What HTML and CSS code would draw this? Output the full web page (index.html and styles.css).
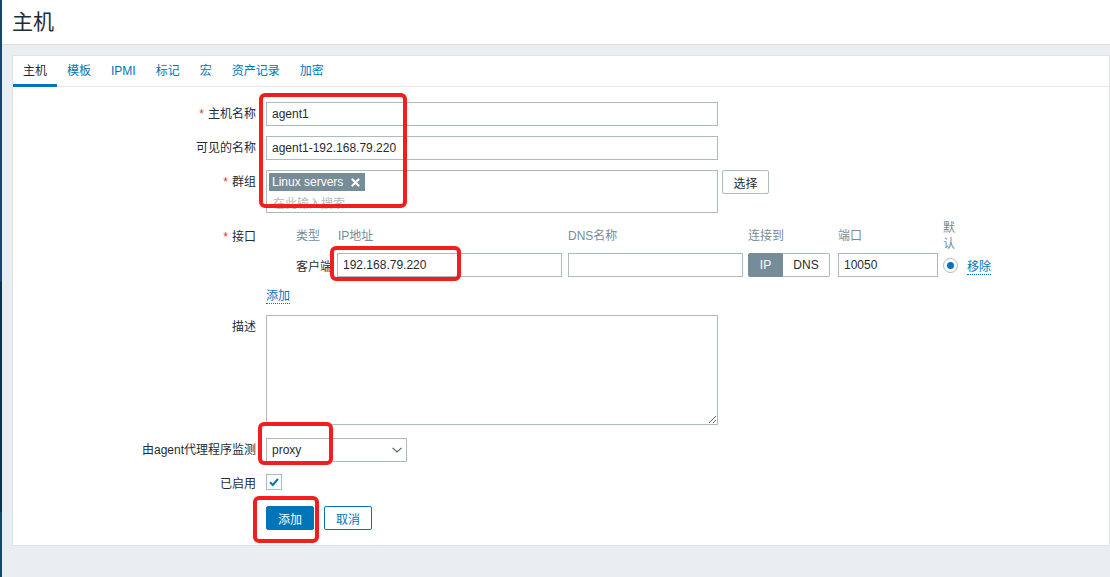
FILE: index.html
```html
<!DOCTYPE html>
<html lang="zh-CN">
  <head>
    <meta charset="UTF-8" />
    <meta name="viewport" content="width=device-width, initial-scale=1.0" />
    <title>主机</title>
    <link rel="stylesheet" href="styles.css">
  </head>
  <body>
    <div class="page">
      <aside class="sidebar"></aside>
      <main class="main">
        <header class="header">
          <h1 class="header__title">主机</h1>
        </header>
        <div class="wrap">
          <div class="card">
            <ul class="tabs">
              <li class="tabs__item tabs__item--active">主机</li>
              <li class="tabs__item">模板</li>
              <li class="tabs__item">IPMI</li>
              <li class="tabs__item">标记</li>
              <li class="tabs__item">宏</li>
              <li class="tabs__item">资产记录</li>
              <li class="tabs__item">加密</li>
            </ul>
            <form class="form">
              <div class="form__row">
                <label class="form__label"><span class="req">*</span>主机名称</label>
                <div class="form__field"><input class="input input--wide" type="text" value="agent1" /></div>
              </div>
              <div class="form__row">
                <label class="form__label">可见的名称</label>
                <div class="form__field"><input class="input input--wide" type="text" value="agent1-192.168.79.220" /></div>
              </div>
              <div class="form__row">
                <label class="form__label"><span class="req">*</span>群组</label>
                <div class="form__field form__field--inline">
                  <div class="multi">
                    <div class="multi__tags">
                      <span class="tag">Linux servers
                        <svg class="tag__x" width="9" height="9" viewBox="0 0 9 9"><path d="M1.5 1.5 L7.5 7.5 M7.5 1.5 L1.5 7.5" stroke="#fff" stroke-width="2.2" stroke-linecap="round" /></svg>
                      </span>
                    </div>
                    <div class="multi__placeholder">在此输入搜索</div>
                  </div>
                  <button class="btn btn--alt btn--select" type="button">选择</button>
                </div>
              </div>
              <div class="form__row form__row--iface">
                <label class="form__label form__label--top"><span class="req">*</span>接口</label>
                <div class="form__field">
                  <div class="iface">
                    <div></div>
                    <div class="iface__head">类型</div>
                    <div class="iface__head iface__head--ip">IP地址</div>
                    <div class="iface__head">DNS名称</div>
                    <div class="iface__head">连接到</div>
                    <div class="iface__head">端口</div>
                    <div class="iface__head iface__head--default">默认</div>
                    <div></div>

                    <div></div>
                    <div class="iface__type">客户端</div>
                    <div><input class="input input--ip" type="text" value="192.168.79.220" /></div>
                    <div><input class="input input--dns" type="text" value="" /></div>
                    <div class="toggle">
                      <span class="toggle__seg toggle__seg--on">IP</span>
                      <span class="toggle__seg">DNS</span>
                    </div>
                    <div><input class="input input--port" type="text" value="10050" /></div>
                    <div class="radio"><span class="radio__dot"></span></div>
                    <div><a class="link">移除</a></div>
                  </div>
                  <div class="iface__add"><a class="link">添加</a></div>
                </div>
              </div>
              <div class="form__row">
                <label class="form__label form__label--top">描述</label>
                <div class="form__field"><textarea class="textarea"></textarea></div>
              </div>
              <div class="form__row">
                <label class="form__label">由agent代理程序监测</label>
                <div class="form__field">
                  <div class="select">
                    <span>proxy</span>
                    <svg width="10" height="6" viewBox="0 0 10 6"><path d="M0.5 0.8 L5 5 L9.5 0.8" fill="none" stroke="#4f5f68" stroke-width="1.1" /></svg>
                  </div>
                </div>
              </div>
              <div class="form__row form__row--check">
                <label class="form__label">已启用</label>
                <div class="form__field">
                  <span class="checkbox">
                    <svg width="14" height="14" viewBox="0 0 14 14"><path d="M3 7.2 L5.8 10 L11 4" fill="none" stroke="#0275b8" stroke-width="2" /></svg>
                  </span>
                </div>
              </div>
              <div class="form__row">
                <div></div>
                <div class="form__field form__field--buttons">
                  <button class="btn" type="button">添加</button>
                  <button class="btn btn--alt btn--cancel" type="button">取消</button>
                </div>
              </div>
            </form>
          </div>
        </div>
      </main>
    </div>

    <div class="mark mark--names"></div>
    <div class="mark mark--ip"></div>
    <div class="mark mark--proxy"></div>
    <div class="mark mark--submit"></div>
  </body>
</html>
```

FILE: styles.css
```css
html,
body {
  margin: 0;
  height: 100%;
}
body {
  background-color: #ebeef0;
  font-family: "Liberation Sans", Arial, "Noto Sans CJK SC", sans-serif;
  font-size: 12px;
  color: #1f2c33;
  overflow: hidden;
}
.page {
  display: flex;
  min-height: 100%;
}
.sidebar {
  flex: 0 0 2px;
  background: linear-gradient(#104a72 0 282px, #0e324c 282px 512px, #0d4b79 512px);
}
.main {
  flex: 1 1 auto;
}
.header {
  height: 44px;
  display: flex;
  align-items: center;
  padding-left: 10px;
  background-color: #fff;
  border-bottom: 1px solid #dcdfe2;
}
.header__title {
  margin: 0;
  font-size: 21px;
  font-weight: 400;
  line-height: 24px;
}
.wrap {
  padding: 10px 0 0 10px;
}
.card {
  background-color: #fff;
  border: 1px solid #dfe4e7;
}
.tabs {
  display: flex;
  margin: 0;
  padding: 0;
  list-style: none;
  border-bottom: 1px solid #e6e9eb;
}
.tabs__item {
  padding: 2px 10px 0;
  line-height: 26px;
  border-bottom: 3px solid transparent;
  margin-bottom: -1px;
  color: #0275b8;
}
.tabs__item--active {
  color: #1f2c33;
  border-bottom-color: #0275b8;
}
.form {
  display: flex;
  flex-direction: column;
  gap: 10px;
  padding: 15px 0;
}
.form__row {
  display: grid;
  grid-template-columns: 243px 1fr;
  column-gap: 10px;
}
.form__row--iface {
  margin-top: -3px;
}
.form__label {
  text-align: right;
  line-height: 24px;
  white-space: nowrap;
}
.form__label--top {
  line-height: 16px;
  padding-top: 4px;
}
.form__row--iface .form__label--top {
  padding-top: 9px;
}
.req {
  color: #e33734;
  margin-right: 4px;
}
.form__field--inline {
  display: flex;
  align-items: flex-start;
  gap: 4px;
}
.form__field--buttons {
  display: flex;
  gap: 10px;
}
.form__row--check .form__field {
  height: 24px;
  padding-top: 2px;
  box-sizing: border-box;
}
.input {
  display: block;
  height: 24px;
  box-sizing: border-box;
  border: 1px solid #acbbc2;
  padding: 0 5px;
  font-family: inherit;
  font-size: 12px;
  color: #1f2c33;
  background-color: #fff;
  outline: none;
}
.input--wide {
  width: 452px;
}
.input--ip {
  width: 225px;
}
.input--dns {
  width: 175px;
}
.input--port {
  width: 100px;
}
.multi {
  width: 452px;
  height: 43px;
  box-sizing: border-box;
  border: 1px solid #acbbc2;
  padding: 2px 0 0 2px;
  overflow: hidden;
}
.multi__tags {
  display: flex;
}
.tag {
  display: inline-flex;
  align-items: center;
  height: 18px;
  padding: 0 5px 0 3px;
  background-color: #768d99;
  color: #fff;
  font-size: 12px;
}
.tag__x {
  margin-left: 8px;
}
.multi__placeholder {
  padding: 3px 0 0 4px;
  line-height: 20px;
  color: #acbbc2;
}
.btn {
  height: 24px;
  min-width: 48px;
  padding: 0 10px;
  border: 1px solid #0275b8;
  border-radius: 2px;
  background-color: #0275b8;
  color: #fff;
  font-family: inherit;
  font-size: 12px;
}
.btn--alt {
  background-color: #fff;
  color: #0275b8;
}
.btn--select {
  width: 47px;
  min-width: 0;
  padding: 0;
  border-color: #acbbc2;
  color: #1f2c33;
}
.iface {
  display: grid;
  grid-template-columns: 30px 41px 231px 180px 90px 105px 24px auto;
  row-gap: 1px;
  align-items: center;
}
.iface__head {
  color: #768d99;
  line-height: 16px;
}
.iface__head--ip {
  padding-left: 1px;
}
.iface__head--default {
  width: 15px;
}
.iface__type {
  white-space: nowrap;
}
.iface__add {
  margin-top: 10px;
  line-height: 18px;
}
.link {
  color: #0275b8;
  border-bottom: 1px dotted #0275b8;
  cursor: pointer;
}
.toggle {
  display: flex;
  width: 82px;
  height: 24px;
}
.toggle__seg {
  display: flex;
  align-items: center;
  justify-content: center;
  width: 47px;
  box-sizing: border-box;
  border: 1px solid #acbbc2;
  border-left: none;
  border-radius: 0 2px 2px 0;
}
.toggle__seg--on {
  width: 35px;
  background-color: #768d99;
  border: 1px solid #768d99;
  border-radius: 2px 0 0 2px;
  color: #fff;
}
.radio {
  width: 15px;
  height: 15px;
  box-sizing: border-box;
  border: 1px solid #acbbc2;
  border-radius: 50%;
  display: flex;
  align-items: center;
  justify-content: center;
}
.radio__dot {
  width: 7px;
  height: 7px;
  border-radius: 50%;
  background-color: #0275b8;
}
.textarea {
  display: block;
  width: 452px;
  height: 110px;
  margin-bottom: 3px;
  box-sizing: border-box;
  border: 1px solid #acbbc2;
  font-family: inherit;
  font-size: 12px;
  outline: none;
}
.select {
  display: flex;
  align-items: center;
  justify-content: space-between;
  width: 141px;
  height: 24px;
  box-sizing: border-box;
  border: 1px solid #acbbc2;
  padding: 0 4px 0 5px;
}
.checkbox {
  display: flex;
  align-items: center;
  justify-content: center;
  width: 16px;
  height: 16px;
  box-sizing: border-box;
  border: 1px solid #acbbc2;
}
.mark {
  position: absolute;
  box-sizing: border-box;
  border: 4px solid #f21e1e;
  border-radius: 6px;
}
.mark--names {
  left: 259px;
  top: 93px;
  width: 148px;
  height: 115px;
}
.mark--ip {
  left: 330px;
  top: 246px;
  width: 131px;
  height: 35px;
}
.mark--proxy {
  left: 258px;
  top: 422px;
  width: 75px;
  height: 43px;
}
.mark--submit {
  left: 253px;
  top: 496px;
  width: 66px;
  height: 47px;
}
```
